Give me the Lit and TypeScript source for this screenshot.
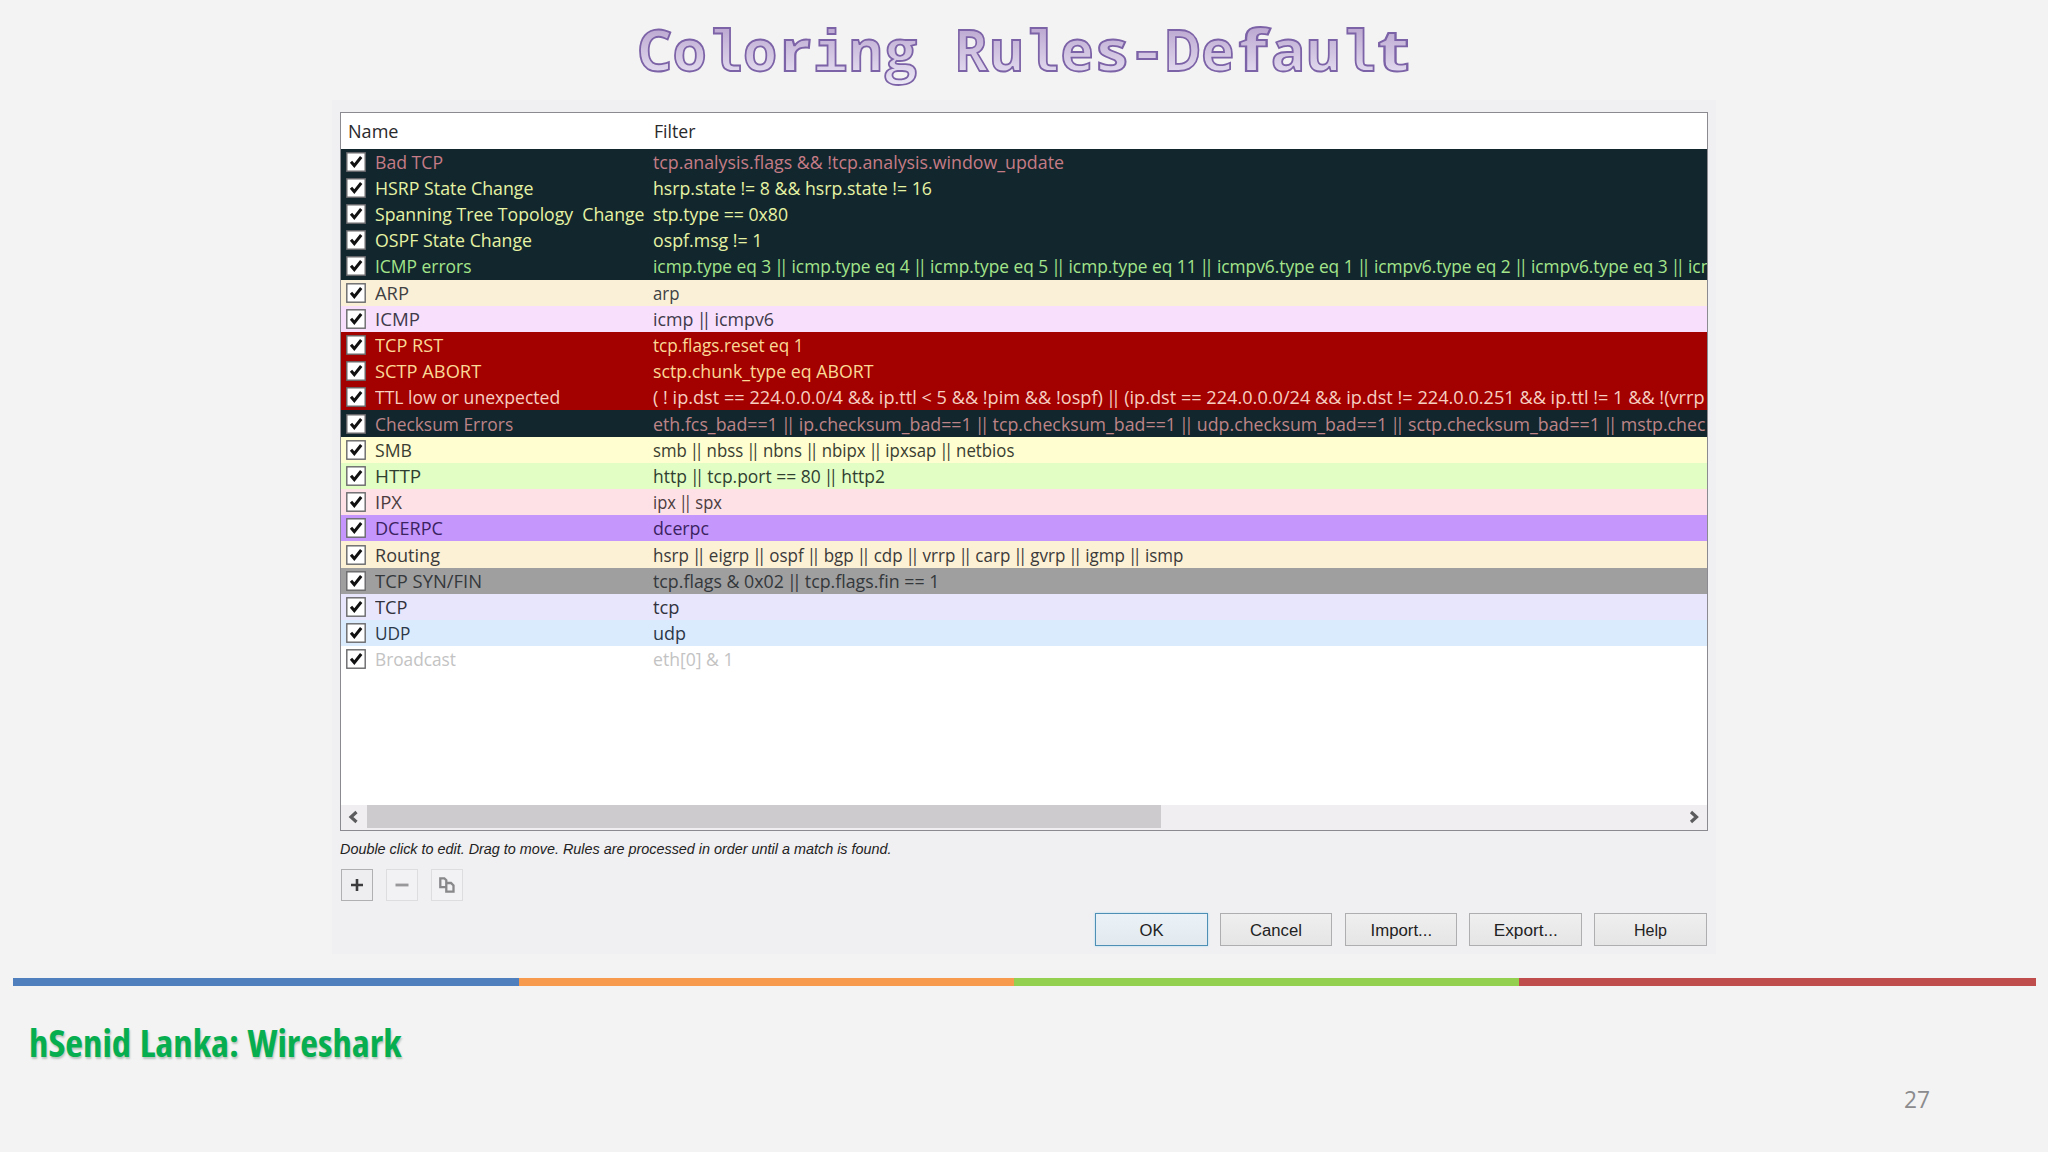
import { LitElement, html, css, svg } from "lit";
import { customElement, property } from "lit/decorators.js";
import { styleMap } from "lit/directives/style-map.js";

/** Single line of text squeezed or stretched to a given width. */
@customElement("fit-text")
class FitText extends LitElement {
  @property() text = "";
  /** Text that follows the fitted part, at the same scale. */
  @property() rest = "";
  @property({ type: Number }) width = 0;

  static styles = css`
    :host { display: block; white-space: pre; }
    .line { display: inline-block; transform-origin: 0 50%; }
    :host([centered]) .line { transform-origin: 50% 50%; }
    .or { margin: 0 -1.5px; }
    .bar { letter-spacing: -5px; }
  `;

  updated() {
    const line = this.renderRoot.querySelector(".line") as HTMLElement;
    const fitted = this.renderRoot.querySelector(".fitted") as HTMLElement;
    line.style.transform = "none";
    const natural = fitted.getBoundingClientRect().width;
    if (natural > 0 && this.width > 0) {
      line.style.transform = `scaleX(${(this.width + 1.5) / natural})`;
    }
  }

  render() {
    const parts = this.text.split("||");
    return html`<span class="line"><span class="fitted">${parts.map((p, i) =>
      i === 0 ? p : html`<span class="or"><span class="bar">|</span>|</span>${p}`
    )}</span>${this.rest}</span>`;
  }
}

interface Rule {
  name: string;
  nameWidth: number;
  filter: string;
  filterWidth: number;
  rest?: string;
  bg: string;
  fg: string;
}

const DARK = "#12262d";
const RED = "#a30000";

const RULES: Rule[] = [
  { name: "Bad TCP", nameWidth: 66.5, filter: "tcp.analysis.flags && !tcp.analysis.window_update", filterWidth: 409.5, bg: DARK, fg: "#c57c86" },
  { name: "HSRP State Change", nameWidth: 157, filter: "hsrp.state != 8 && hsrp.state != 16", filterWidth: 277.5, bg: DARK, fg: "#e6f3a4" },
  { name: "Spanning Tree Topology  Change", nameWidth: 268, filter: "stp.type == 0x80", filterWidth: 133.5, bg: DARK, fg: "#e6f3a4" },
  { name: "OSPF State Change", nameWidth: 155.5, filter: "ospf.msg != 1", filterWidth: 108, bg: DARK, fg: "#e6f3a4" },
  { name: "ICMP errors", nameWidth: 95, filter: "icmp.type eq 3 || icmp.type eq 4 || icmp.type eq 5 || icmp.type eq 11 || icmpv6.type eq 1 || icmpv6.type eq 2 || icmpv6.type eq 3 ||", filterWidth: 1029, rest: " icm", bg: DARK, fg: "#a3e58b" },
  { name: "ARP", nameWidth: 32.5, filter: "arp", filterWidth: 25, bg: "#faf0d7", fg: "#3f4143" },
  { name: "ICMP", nameWidth: 43.5, filter: "icmp || icmpv6", filterWidth: 119.5, bg: "#f8dffc", fg: "#403a4a" },
  { name: "TCP RST", nameWidth: 66.7, filter: "tcp.flags.reset eq 1", filterWidth: 149, bg: RED, fg: "#fbd996" },
  { name: "SCTP ABORT", nameWidth: 104.7, filter: "sctp.chunk_type eq ABORT", filterWidth: 219, bg: RED, fg: "#fbd996" },
  { name: "TTL low or unexpected", nameWidth: 183.7, filter: "( ! ip.dst == 224.0.0.0/4 && ip.ttl < 5 && !pim && !ospf) || (ip.dst == 224.0.0.0/24 && ip.dst != 224.0.0.251 && ip.ttl != 1 && !(vrrp", filterWidth: 1050, bg: RED, fg: "#f6cfc0" },
  { name: "Checksum Errors", nameWidth: 136.7, filter: "eth.fcs_bad==1 || ip.checksum_bad==1 || tcp.checksum_bad==1 || udp.checksum_bad==1 || sctp.checksum_bad==1 || mstp.chec", filterWidth: 1051, bg: DARK, fg: "#bd8488" },
  { name: "SMB", nameWidth: 35.5, filter: "smb || nbss || nbns || nbipx || ipxsap || netbios", filterWidth: 360, bg: "#fefed0", fg: "#3a3d30" },
  { name: "HTTP", nameWidth: 44.7, filter: "http || tcp.port == 80 || http2", filterWidth: 230.5, bg: "#e3fec5", fg: "#2f4030" },
  { name: "IPX", nameWidth: 25.5, filter: "ipx || spx", filterWidth: 67.5, bg: "#fee1e6", fg: "#4c3c40" },
  { name: "DCERPC", nameWidth: 66.5, filter: "dcerpc", filterWidth: 54.5, bg: "#c597fd", fg: "#3b2260" },
  { name: "Routing", nameWidth: 63.5, filter: "hsrp || eigrp || ospf || bgp || cdp || vrrp || carp || gvrp || igmp || ismp", filterWidth: 529, bg: "#fdf1d5", fg: "#3b3a3a" },
  { name: "TCP SYN/FIN", nameWidth: 105.5, filter: "tcp.flags & 0x02 || tcp.flags.fin == 1", filterWidth: 285, bg: "#9f9fa0", fg: "#34383b" },
  { name: "TCP", nameWidth: 31, filter: "tcp", filterWidth: 25, bg: "#e7e6fc", fg: "#33333e" },
  { name: "UDP", nameWidth: 34, filter: "udp", filterWidth: 31.5, bg: "#dbebfe", fg: "#2b3848" },
  { name: "Broadcast", nameWidth: 79.5, filter: "eth[0] & 1", filterWidth: 79, bg: "#ffffff", fg: "#c3c3c3" },
];

const BUTTONS = [
  { label: "OK", width: 22.5 },
  { label: "Cancel", width: 50.5 },
  { label: "Import...", width: 60 },
  { label: "Export...", width: 62.5 },
  { label: "Help", width: 31.5 },
];

const TITLE = "Coloring Rules-Default";
const PITCH = 35.2;
/** Horizontal scale that makes each letter fill its fixed-pitch cell. */
const STRETCH: Record<string, number> = {
  C: 0.98, o: 0.97, n: 0.95, r: 1.22, g: 0.99, R: 0.9, u: 0.95, e: 0.98, s: 1.12,
  "-": 1.3, D: 0.9, f: 1.3, a: 1, t: 1.3, l: 0.97, i: 0.97,
};

@customElement("app-root")
class AppRoot extends LitElement {
  static styles = css`
    :host {
      display: flex; flex-direction: column; box-sizing: border-box;
      width: 2048px; height: 1152px; overflow: hidden;
      background: #f3f3f4; font-family: "Open Sans", "Noto Sans", sans-serif;
    }
    svg { display: block; }
    .title { width: 2048px; height: 100px; flex: none; }
    .title text { font-weight: 700; font-size: 57px; font-family: "Open Sans", sans-serif; }
    .title .slab { font-family: "Liberation Mono", monospace; font-size: 60px; }
    .dialog {
      flex: none; box-sizing: border-box; width: 1384px; height: 854px;
      margin-left: 332px; padding: 12px 0 0 8px; background: #f0eff1;
    }
    .table {
      box-sizing: border-box; width: 1368px; height: 719px; overflow: hidden;
      border: 1.5px solid #8b8a90; background: #fff;
      display: flex; flex-direction: column; font-size: 18px; line-height: 26px;
    }
    .head { display: flex; height: 35.6px; flex: none; align-items: center; padding-top: 1px; box-sizing: border-box; color: #29292c; }
    .head .first { width: 306.5px; padding-left: 6.5px; box-sizing: border-box; }
    .head .second { padding-left: 6px; }
    .rows { flex: 1; }
    .row { display: flex; align-items: center; height: 26.2px; padding-left: 5px; }
    .check { width: 20px; height: 20px; flex: none; margin-right: 9.3px; }
    .name { width: 277.6px; flex: none; }
    .filter { flex: none; }
    .scroll { height: 25px; flex: none; display: flex; background: #f0eef1; align-items: center; }
    .arrow { width: 26px; height: 24px; flex: none; }
    .thumb { width: 794px; height: 23px; margin-bottom: 2px; background: #cdcbce; }
    .gap { flex: 1; }
    .note { height: 38px; line-height: 37px; font: italic 14.6px/36px "Liberation Sans", Arial, sans-serif; color: #222; }
    .tools { display: flex; gap: 13px; padding-left: 1px; }
    .tool { width: 32px; height: 32px; box-sizing: border-box; border: 1.5px solid #dddcde; background: #f2f1f3; display: grid; place-items: center; }
    .tool.on { border-color: #b0afb1; background: #eeedef; }
    .buttons { display: flex; gap: 12.3px; padding-left: 755px; padding-top: 12px; }
    .button {
      box-sizing: border-box; width: 112.5px; height: 33px; border: 1.5px solid #aeadaf;
      background: linear-gradient(#f0eff0, #e6e5e6); display: flex; justify-content: center;
      font: 16px/33px "Liberation Sans", Arial, sans-serif; color: #222;
    }
    .button.default { border-color: #4d8fb5; background: linear-gradient(#eaf2f8, #e2e9ee); box-shadow: 0 0 2px #a5dcf6; }
    .bar { display: flex; flex: none; height: 8px; margin: 24px 12px 0 12.5px; }
    .seg.blue { width: 506.5px; background: #4f80bd; }
    .seg.orange { width: 494.5px; background: #f79a4d; }
    .seg.green { width: 505.5px; background: #94d050; }
    .seg.red { flex: 1; background: #be4d4b; }
    .foot { display: flex; justify-content: space-between; padding: 29px 119px 0 29px; }
    .brand { font-weight: 700; font-size: 38px; line-height: 54px; font-stretch: 75%; word-spacing: 1.5px; color: #06ae50; text-shadow: 1px 2px 2px rgba(0, 60, 20, 0.25); }
    .page { font-size: 23px; line-height: 32px; padding-top: 68px; width: 25px; color: #8b8b8d; }
  `;

  private title() {
    return html`<svg class="title" viewBox="0 0 2048 100">
      <defs>
        <linearGradient id="lilac" gradientUnits="userSpaceOnUse" x1="0" y1="-45" x2="0" y2="13">
          <stop offset="0" stop-color="#bba6d0"></stop>
          <stop offset="1" stop-color="#ebe7f6"></stop>
        </linearGradient>
      </defs>
      ${[...TITLE].map((ch, i) => svg`<text
        class=${"li".includes(ch) ? "slab" : ""}
        transform="translate(${654.5 + i * PITCH} 71) scale(${STRETCH[ch] ?? 1} 1)"
        text-anchor="middle" fill="url(#lilac)" stroke="#7c62a6" stroke-width="1.8">${ch}</text>`)}
    </svg>`;
  }

  render() {
    return html`
      ${this.title()}
      <div class="dialog">
        <div class="table">
          <div class="head">
            <div class="first"><fit-text text="Name" width="49"></fit-text></div>
            <div class="second"><fit-text text="Filter" width="40"></fit-text></div>
          </div>
          <div class="rows">
            ${RULES.map((r) => html`<div class="row" style=${styleMap({ background: r.bg, color: r.fg })}>
              <svg class="check" viewBox="0 0 20 20">
                <rect x="0.8" y="0.8" width="18.4" height="18.4" fill="#fff" stroke="#68686b" stroke-width="1.4"></rect>
                <path d="M5 9.8L8.3 13.6L15.2 5" fill="none" stroke="#111" stroke-width="3"></path>
              </svg>
              <fit-text class="name" .text=${r.name} .width=${r.nameWidth}></fit-text>
              <fit-text class="filter" .text=${r.filter} .rest=${r.rest ?? ""} .width=${r.filterWidth}></fit-text>
            </div>`)}
          </div>
          <div class="scroll">
            <svg class="arrow" viewBox="0 0 26 24"><path d="M15.5 6L10 11L15.5 16" fill="none" stroke="#5c5b5e" stroke-width="3.2"></path></svg>
            <div class="thumb"></div>
            <div class="gap"></div>
            <svg class="arrow" viewBox="0 0 26 24"><path d="M10 6L15.5 11L10 16" fill="none" stroke="#5c5b5e" stroke-width="3.2"></path></svg>
          </div>
        </div>
        <div class="note"><fit-text text="Double click to edit. Drag to move. Rules are processed in order until a match is found." width="550"></fit-text></div>
        <div class="tools">
          <div class="tool on"><svg width="14" height="14" viewBox="0 0 14 14"><path d="M7 1V13M1 7H13" stroke="#3c3c3f" stroke-width="2.6"></path></svg></div>
          <div class="tool"><svg width="14" height="14" viewBox="0 0 14 14"><path d="M0.5 7H13.5" stroke="#98979a" stroke-width="2.8"></path></svg></div>
          <div class="tool"><svg width="16" height="16" viewBox="0 0 16 16"><path d="M6.5 10.2H1.3V1.3H5.3L7.3 3.3V5.5M7.3 6H12L14.5 8.5V14.6H7.3Z" fill="none" stroke="#88878a" stroke-width="2.3"></path></svg></div>
        </div>
        <div class="buttons">
          ${BUTTONS.map((b, i) => html`<div class="button ${i === 0 ? "default" : ""}"><fit-text centered .text=${b.label} .width=${b.width}></fit-text></div>`)}
        </div>
      </div>
      <div class="bar"><div class="seg blue"></div><div class="seg orange"></div><div class="seg green"></div><div class="seg red"></div></div>
      <div class="foot">
        <div class="brand"><fit-text text="hSenid Lanka: Wireshark" width="371"></fit-text></div>
        <div class="page"><fit-text text="27" width="24.5"></fit-text></div>
      </div>
    `;
  }
}
